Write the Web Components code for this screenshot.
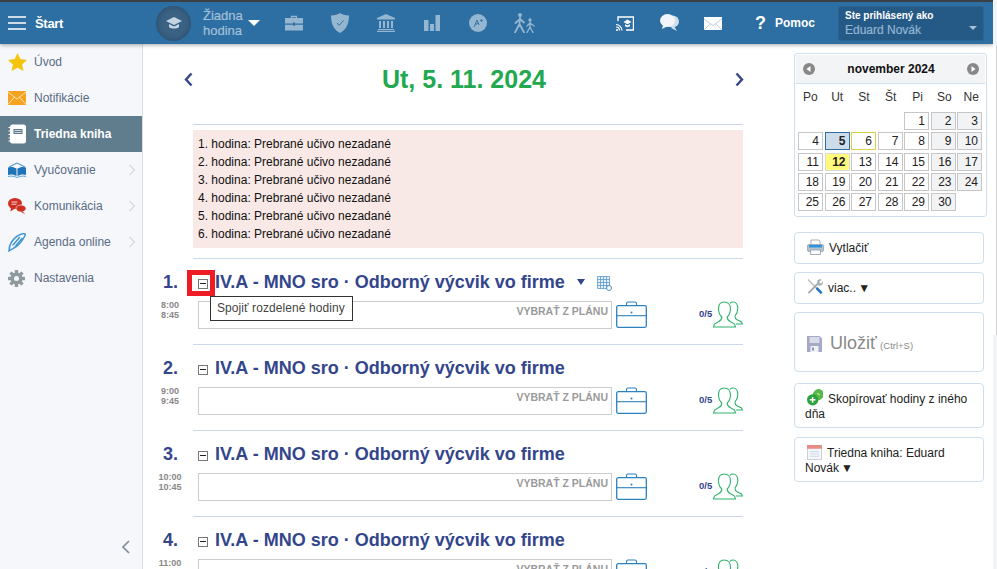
<!DOCTYPE html>
<html><head><meta charset="utf-8">
<style>
html,body{margin:0;padding:0;height:569px;overflow:hidden;background:#fff;font-family:"Liberation Sans",Arial,sans-serif}
app-shell{display:block}
</style></head><body>
<app-shell></app-shell>
<script>
const ICON={
menu:'<svg width="18" height="14" viewBox="0 0 18 14"><path d="M0 1h18M0 7h18M0 13h18" stroke="#fff" stroke-width="1.4"/></svg>',
cap:'<svg width="16" height="14" viewBox="0 0 16 14" fill="#c4d5e2"><path d="M8 1 0 5l8 4 8-4z"/><path d="M3 8v3c2 2 8 2 10 0V8L8 10.5z"/></svg>',
brief:'<svg width="18" height="16" viewBox="0 0 18 16"><path d="M6.5 3V1.500h5V3" fill="none" stroke="#94b6d1" stroke-width="1.300"/><path d="M0 3h18v5.500H10v-1H8v1H0zM0 9.700h8v1h2v-1h8V15.500H0z" fill="#94b6d1"/></svg>',
shield:'<svg width="18" height="20" viewBox="0 0 18 20"><path d="M9 0c2 1.500 5 2.500 9 2.500C18 10 16 16 9 20 2 16 0 10 0 2.500 4 2.500 7 1.500 9 0z" fill="#94b6d1"/><path d="M6 10l2.200 2.300L12.500 7.500" fill="none" stroke="#2d6ea3" stroke-width=".9"/></svg>',
bank:'<svg width="18" height="18" viewBox="0 0 18 18" fill="#94b6d1"><path d="M9 0 0 4v1.500h18V4z"/><path d="M2 7h2v7H2zM6 7h2v7H6zM10 7h2v7h-2zM14 7h2v7h-2zM1 15h16v1H1zM0 16.800h18V18H0z"/></svg>',
bars:'<svg width="16" height="16" viewBox="0 0 16 16" fill="#94b6d1"><path d="M0 5h4.500v11H0zM6 9h4v7H6zM11.500 0H16v16h-4.500z"/></svg>',
aplus:'<svg width="18" height="18" viewBox="0 0 18 18"><circle cx="9" cy="9" r="9" fill="#94b6d1"/><path d="M5 13l3-7 2 5M6.500 10.500 10 9" fill="none" stroke="#2d6ea3" stroke-width=".9"/><path d="M11 6.500h3M12.500 5v3" stroke="#2d6ea3" stroke-width=".8"/></svg>',
walk:'<svg width="22" height="20" viewBox="0 0 22 20" fill="none" stroke="#94b6d1" stroke-linecap="round"><circle cx="6" cy="2" r="2" fill="#94b6d1" stroke="none"/><circle cx="16" cy="7" r="1.700" fill="#94b6d1" stroke="none"/><path d="M6 4.500 5.500 11M5.500 11 1 19.500M5.500 11 10 19.500M6 6 1.500 10M6 6 10 9.500" stroke-width="1.800"/><path d="M16 9v5M16 14l-3 5.500M16 14l3 5.500M16 10l-3 3M16 10l4 3" stroke-width="1.400"/></svg>',
cast:'<svg width="18" height="15" viewBox="0 0 18 15"><path d="M2 5V1h15.500v13H10" fill="none" stroke="#fff" stroke-width="1.400"/><path d="M0 8.500c3 0 6 3 6 6M0 11c2 0 3.500 1.500 3.500 3.500" fill="none" stroke="#fff" stroke-width="1.200"/><circle cx="1" cy="14" r="1" fill="#fff"/><path d="M11.500 3.500 7.500 6l4 2.300L15.500 6z M9 8.300v2l2.500 1 2.500-1v-2l-2.500 1.200z" fill="#fff"/></svg>',
chat:'<svg width="19" height="18" viewBox="0 0 19 18"><ellipse cx="12.500" cy="7.500" rx="6.500" ry="6" fill="#cfdfeb"/><path d="M14 12l3 5-6-3z" fill="#cfdfeb"/><ellipse cx="7.500" cy="6.500" rx="7.500" ry="6.500" fill="#f2f6fa"/><path d="M3 11l-1 4 5-2.500z" fill="#f2f6fa"/></svg>',
mail:'<svg width="18" height="13" viewBox="0 0 18 13"><rect width="18" height="13" fill="#fff"/><path d="M0 2l9 6.500L18 2M0 13l6.500-6.500M18 13l-6.500-6.500" fill="none" stroke="#a9c4da" stroke-width=".8"/></svg>',
star:'<svg width="19" height="18" viewBox="0 0 19 18"><path d="M9.500 0l2.900 6.100 6.600.8-4.900 4.500 1.300 6.600-5.900-3.300L3.600 18l1.300-6.600L0 6.900l6.600-.8z" fill="#f5c40f"/></svg>',
env:'<svg width="18" height="14" viewBox="0 0 18 14"><rect width="18" height="14" fill="#f6a320"/><path d="M0 1l9 7 9-7M0 13.500l6.500-7.500M18 13.500 11.500 6" fill="none" stroke="#fde3b4" stroke-width="1"/></svg>',
book:'<svg width="19" height="20" viewBox="0 0 19 20"><rect x="2" y="0.500" width="16" height="19" rx="2.500" fill="#fff"/><rect x="5.500" y="5" width="9" height="5" fill="#5f7d8c"/><path d="M6.500 6.500h7M6.500 8.500h7" stroke="#fff" stroke-width=".7"/><path d="M0.500 3.500h3M0.500 7h3M0.500 10.500h3M0.500 14h3M0.500 17h3" stroke="#fff" stroke-width="1.200"/></svg>',
openbook:'<svg width="18" height="16" viewBox="0 0 18 16"><path d="M1 5 9 1l8 4" fill="none" stroke="#2f85c5" stroke-width="1"/><path d="M0 5.500c3-1 6-.5 8.500 1V14C6 12.500 3 12 0 13zM18 5.500c-3-1-6-.5-8.500 1V14c2.500-1.500 5.500-2 8.500-1z" fill="#1f75b8"/><path d="M0 14.500c3-.8 6-.3 9 1 3-1.300 6-1.800 9-1" fill="none" stroke="#5aa3d8" stroke-width="1"/></svg>',
talk:'<svg width="18" height="17" viewBox="0 0 18 17"><ellipse cx="7" cy="5.500" rx="7" ry="5.500" fill="#cf2f22"/><path d="M3 9.500l-.5 4 4.500-3z" fill="#cf2f22"/><path d="M3.500 4h6M3.500 6.200h5" stroke="#fff" stroke-width=".8"/><ellipse cx="13" cy="10.500" rx="5" ry="3.500" fill="#cf2f22" stroke="#fff" stroke-width=".6"/><path d="M14 13l3.500 3.500L13 14z" fill="#cf2f22"/></svg>',
quill:'<svg width="18" height="19" viewBox="0 0 18 19" fill="none" stroke="#3d94d6" stroke-width="1.500" stroke-linecap="round"><path d="M1 18c0-3 .5-6 2.500-9 3-4.500 7-7.500 12-8.500 2-.3 2 1.500 1 3-2 4-5 8-9 10.500-2 1.300-4 2-6.500 4z"/><path d="M5 12 11.500 4.500M8 12.500 14 5.500"/></svg>',
gear:'<svg width="17" height="17" viewBox="0 0 17 17"><g fill="#8e9a9d"><circle cx="8.500" cy="8.500" r="6"/><rect x="6.800" y="0" width="3.400" height="17" rx=".5"/><rect x="6.800" y="0" width="3.400" height="17" rx=".5" transform="rotate(45 8.500 8.500)"/><rect x="6.800" y="0" width="3.400" height="17" rx=".5" transform="rotate(90 8.500 8.500)"/><rect x="6.800" y="0" width="3.400" height="17" rx=".5" transform="rotate(135 8.500 8.500)"/></g><circle cx="8.500" cy="8.500" r="2.500" fill="#f5f7fa"/></svg>',
chev:'<svg width="8" height="12" viewBox="0 0 8 12"><path d="M1.500 1l5 5-5 5" fill="none" stroke="#d5dadf" stroke-width="1.300"/></svg>',
collapse:'<svg width="9" height="14" viewBox="0 0 9 14"><path d="M8 1 2 7l6 6" fill="none" stroke="#7d8f9e" stroke-width="1.700"/></svg>',
prev:'<svg width="9" height="15" viewBox="0 0 9 15"><path d="M7.500 1.500 2 7.500l5.500 6" fill="none" stroke="#33468c" stroke-width="2.400"/></svg>',
next:'<svg width="9" height="15" viewBox="0 0 9 15"><path d="M1.500 1.500 7 7.500l-5.500 6" fill="none" stroke="#33468c" stroke-width="2.400"/></svg>',
table:'<svg width="15" height="15" viewBox="0 0 15 15"><path d="M.5.500h12v12H.5zM.5 3.500h12M.5 6.500h12M.5 9.500h12M3.500.500v12M6.500.500v12M9.500.500v12" fill="#e6f0f8" stroke="#5c9bcb" stroke-width=".8"/><circle cx="12" cy="12" r="2.500" fill="#fff" stroke="#3d86bd" stroke-width=".9"/></svg>',
case:'<svg width="31" height="27" viewBox="0 0 31 27"><path d="M10.500 4.500V2.500q0-1.500 1.500-1.500h7q1.500 0 1.500 1.500v2" fill="none" stroke="#2b82bf" stroke-width="1.100"/><rect x=".7" y="4.700" width="29.600" height="21.600" rx="1.500" fill="#fff" stroke="#2b82bf" stroke-width="1.300"/><path d="M.7 14.700h29.600" stroke="#2b82bf" stroke-width="1.100"/><circle cx="15.500" cy="11.500" r="1" fill="#2b82bf"/></svg>',
people:'<svg width="30" height="27" viewBox="0 0 30 27" fill="none" stroke="#2fb36c" stroke-width="1.100"><path d="M17 2.300C18 1.300 19 1 20 1c3 0 4.800 3 4.800 6.500 0 3-1 5.500-2.800 7.500 0 2 .5 3 2 3.700l4.500 2.300.8 2H23"/><path d="M11 1C7.500 1 5.500 4 5.500 8c0 3.500 1.300 6 3.300 8 0 2.500-.6 3.500-3 4.500L1.500 23 .5 26h22l-1-3-4.300-2.500c-2.400-1-3-2-3-4.500 2-2 3.300-4.500 3.300-8 0-4-2-7-6.500-7z" fill="#fff"/></svg>',
printer:'<svg width="17" height="16" viewBox="0 0 17 16"><path d="M4 6V1h8l1 1v4" fill="#fff" stroke="#8b99a8" stroke-width=".8"/><rect x=".5" y="5.500" width="16" height="7" rx="1.500" fill="#b9c3cd" stroke="#8b99a8" stroke-width=".7"/><rect x="2" y="6" width="13" height="2.500" fill="#2c94de"/><path d="M3.500 11h10v4.500h-10z" fill="#fff" stroke="#8b99a8" stroke-width=".8"/></svg>',
tools:'<svg width="16" height="17" viewBox="0 0 17 17"><path d="M1 1 16 16" stroke="#b8bcc0" stroke-width="1.400"/><path d="M10 10l5.500 5.500" stroke="#1c72c0" stroke-width="2.600"/><path d="M1.500 15.500 11 6" stroke="#9ca3a9" stroke-width="1.800"/><path d="M11 2.500c1-1.500 3-2 4.500-1.200l-2.300 2.200.4 1.500 1.500.4L17 3c.5 2-.8 4-2.800 4.500-1.500.3-3-.3-3.700-1.300z" fill="#a6adb3"/></svg>',
save:'<svg width="15" height="16" viewBox="0 0 15 16"><path d="M0 0h12.500L15 2.500V16H0z" fill="#a5a9c6"/><rect x="2.500" y="1" width="10" height="6" fill="#d8dbea"/><rect x="3.500" y="10" width="8" height="6" fill="#f0f1f6"/><rect x="5" y="11.500" width="2" height="3" fill="#8f94b4"/></svg>',
copy:'<svg width="16" height="17" viewBox="0 0 17 17"><rect x="6.500" y="-0.500" width="11" height="12" rx="5" transform="rotate(45 12 5.500)" fill="#58b947"/><circle cx="6" cy="11" r="6" fill="#2fa23b"/><path d="M6 8v6M3 11h6" stroke="#fff" stroke-width="1.600"/><path d="M11 4l2.500 2" stroke="#bfe8b0" stroke-width="1.200"/></svg>',
cal:'<svg width="15" height="15" viewBox="0 0 16 16"><rect x=".5" y=".5" width="15" height="15" fill="#f5f7fa" stroke="#c9ced3"/><rect x="0" y="0" width="16" height="4" fill="#e88c88"/><path d="M3 7h10M3 9.500h10M3 12h10" stroke="#c7d4e2" stroke-width=".9"/></svg>',
calprev:'<svg width="12" height="12" viewBox="0 0 12 12"><circle cx="6" cy="6" r="6" fill="#888"/><path d="M7.500 3v6L3.500 6z" fill="#fff"/></svg>',
calnext:'<svg width="12" height="12" viewBox="0 0 12 12"><circle cx="6" cy="6" r="6" fill="#888"/><path d="M4.500 3v6l4-3z" fill="#fff"/></svg>'
};
function tpl(name,css,render){
  customElements.define(name,class extends HTMLElement{
    connectedCallback(){if(this.shadowRoot)return;const s=this.attachShadow({mode:'open'});
      s.innerHTML='<style>'+css+'</style>'+render(this);}
  });
}
tpl('top-bar',`:host{display:flex;height:42px;width:993px;background:#2d6ea3;border-top:2px solid #3b4046;box-shadow:0 1px 4px rgba(0,0,0,.35);position:relative;z-index:2;align-items:center;color:#fff;font-weight:400}
.start{display:flex;align-items:center;gap:9px;padding-left:8px;width:156px;box-sizing:border-box;font-size:13px;font-weight:700;letter-spacing:-.3px;flex:none}
.avatar{width:35px;height:35px;border-radius:50%;background:#3b6284;display:flex;align-items:center;justify-content:center;flex:none;margin-right:12px;box-shadow:inset 0 0 6px rgba(20,50,80,.5)}
.lesson{font-size:13px;line-height:15px;font-weight:400;color:#a3c1d9;width:45px;flex:none;-webkit-text-stroke:.2px #a3c1d9}
.tri{width:0;height:0;border:6px solid transparent;border-top:6px solid #fff;border-bottom:0;margin-right:25px;flex:none}
.ic{display:flex;justify-content:center;align-items:center;flex:none}
.help{font-size:18px;font-weight:700;margin-right:10px;width:10px;text-align:center}
.pom{font-size:12px;font-weight:700;width:40px;white-space:nowrap}
.user{position:relative;margin-left:23px;width:146px;height:35px;background:#255a87;border-radius:3px;border:1px solid #2a6493;box-sizing:border-box;padding:2px 6px;font-size:10px;font-weight:700;line-height:14px;flex:none}
.user b{display:block;color:#93b6d3;font-size:12px;line-height:15px;font-weight:400;-webkit-text-stroke:.2px #93b6d3}
.user i{position:absolute;right:6px;top:19px;width:0;height:0;border:4px solid transparent;border-top:4px solid #a9c2d6;border-bottom:0}`,
()=>`<div class="start">${ICON.menu}<span>Štart</span></div>
<div class="avatar">${ICON.cap}</div><div class="lesson">Žiadna hodina</div><div class="tri"></div>
<div class="ic" style="margin-right:28px">${ICON.brief}</div><div class="ic" style="margin-right:28px">${ICON.shield}</div><div class="ic" style="margin-right:29px">${ICON.bank}</div><div class="ic" style="margin-right:29px">${ICON.bars}</div><div class="ic" style="margin-right:27px">${ICON.aplus}</div><div class="ic" style="margin-right:80px">${ICON.walk}</div>
<div class="ic" style="margin-right:26px">${ICON.cast}</div><div class="ic" style="margin-right:25px">${ICON.chat}</div><div class="ic" style="margin-right:33px">${ICON.mail}</div>
<div class="help">?</div><div class="pom">Pomoc</div>
<div class="user">Ste prihlásený ako<b>Eduard Novák</b><i></i></div>`);
tpl('nav-item',`:host{display:flex;align-items:center;height:36px;padding-left:8px;font-size:12px;color:#5a6b85;position:relative}
:host([active]){background:#5f7d8c;color:#fff;font-weight:700}
.i{width:26px;display:flex;align-items:center;flex:none}
.c{position:absolute;right:6px;top:12px;line-height:0}`,
e=>`<span class="i">${ICON[e.getAttribute('icon')]}</span><span><slot></slot></span>${e.hasAttribute('sub')?`<span class="c">${ICON.chev}</span>`:''}`);
tpl('side-bar',`:host{display:block;width:142px;border-right:1px solid #d7dce1;background:#f5f7fa;position:relative;flex:none;height:525px}
.col{position:absolute;left:121px;top:496px;line-height:0}`,
()=>`<slot></slot><span class="col">${ICON.collapse}</span>`);
tpl('lesson-row',`:host{display:block;width:600px;height:86px;box-sizing:border-box;position:relative}
.head{display:flex;align-items:center;height:21px}
.n{font-size:18px;font-weight:700;color:#33468c;flex:none;margin-left:-2px;width:37px;text-align:right}
.box{width:10px;height:10px;border:1px solid #777;box-sizing:border-box;flex:none;margin-left:20px;position:relative;top:1px}
.box::after{content:"";position:absolute;left:1px;right:1px;top:3px;height:1px;background:#222}
.t{font-size:18px;font-weight:700;color:#33468c;margin-left:7px;white-space:nowrap}
.tri{width:0;height:0;border:4px solid transparent;border-top:6px solid #33468c;border-bottom:0;margin-left:12px;position:relative;top:-1px}
.tb{margin-left:12px;line-height:0;position:relative;top:1px}
.body{display:flex;margin-top:8px;height:28px;align-items:flex-start}
.time{width:54px;flex:none;font-size:9px;line-height:10px;font-weight:700;color:#888;text-align:center;margin-top:-1px;box-sizing:border-box}
.inp{margin-left:1px;width:414px;height:28px;box-sizing:border-box;border:1px solid #ccc;flex:none;text-align:right;font-size:10.500px;font-weight:700;color:#9a9a9a;padding:3px 3px 0 0;line-height:13px}
.case{margin-left:4px;line-height:0;flex:none}
.cnt{margin-left:52px;font-size:9.500px;font-weight:700;color:#33468c;width:14px;margin-top:7px;flex:none;line-height:11px}
.ppl{line-height:0;flex:none}
hr{border:0;border-top:1px solid #c9d9e9;margin:15px 0 0 50px;width:550px}`,
e=>{const f=e.hasAttribute('first');return `<div class="head"><div class="n">${e.getAttribute('n')}.</div><div class="box"></div><div class="t">IV.A - MNO sro · Odborný výcvik vo firme</div>${f?`<div class="tri"></div><div class="tb">${ICON.table}</div>`:''}</div>
<div class="body"><div class="time">${e.getAttribute('from')}<br>${e.getAttribute('to')}</div><div class="inp">VYBRAŤ Z PLÁNU</div><div class="case">${ICON.case}</div><div class="cnt">0/5</div><div class="ppl">${ICON.people}</div></div><hr>`});
tpl('mini-calendar',`:host{display:block;width:193px;height:164px;box-sizing:border-box;border:1px solid #cfdfee;border-radius:3px;background:#fff;padding:1px}
.h{display:flex;align-items:center;justify-content:space-between;height:28px;background:#f3f4f6;border-bottom:1px solid #cfdfee;padding:0 6px 0 7px;font-size:12px;font-weight:700;color:#111}
.h svg{display:block}
.d{display:grid;grid-template-columns:repeat(7,26.800px);font-size:12px;color:#333;text-align:center;height:28px;line-height:26px;padding-left:1px}
.g{display:grid;grid-template-columns:repeat(7,25px);gap:2.250px 1.500px;padding-left:2px;grid-auto-rows:18px}
.g div{border:1px solid #c6c6c6;box-sizing:border-box;font-size:12px;line-height:16px;text-align:right;padding-right:3px;color:#222;background:#fff}
.g div.e{border:0;background:none}
.g .w{background:#f2f3f5}
.g .s{background:#cddceb;border-color:#2d6ea3;font-weight:700}
.g .y{border-color:#d8cf4a}
.g .t{background:#fff97e;font-weight:700;border-color:#d9d9d9}`,
()=>{const days=['Po','Ut','St','Št','Pi','So','Ne'];let g='';for(let i=0;i<4;i++)g+='<div class="e"></div>';
 for(let d=1;d<=30;d++){const col=(d+3)%7;let c=col>=5?'w':'';if(d==5)c='s';if(d==6)c='y';if(d==12)c='t';g+=`<div class="${c}">${d}</div>`;}
 return `<div class="h">${ICON.calprev}<span>november 2024</span>${ICON.calnext}</div><div class="d">${days.map(x=>`<span>${x}</span>`).join('')}</div><div class="g">${g}</div>`});
tpl('side-btn',`:host{display:block;width:190px;box-sizing:border-box;border:1px solid #cfdfee;border-radius:4px;background:#fff;font-size:12px;color:#222;line-height:15px;padding:8px 10px 7px 10px}
:host([big]){padding:23px 10px 0;height:60px;color:#8a8a8a}
:host([two]){height:45px}
svg{margin:-4px 5px -3px 2px}
:host([big]) svg{margin-right:8px}`,
e=>`${ICON[e.getAttribute('icon')]}<slot></slot>`);
tpl('app-shell',`:host{display:block;height:569px;overflow:hidden;position:relative}
.main{display:flex;height:525px;overflow:hidden}
.content{flex:none;width:651px;position:relative;height:525px;overflow:hidden}
.date{display:flex;justify-content:space-between;align-items:center;width:560px;margin:20px 0 0 41px;height:30px}
.date h1{margin:0;font-size:25px;font-weight:700;color:#22a84f;line-height:30px}
.date svg{display:block}
.rule{border:0;border-top:1px solid #c9d9e9;margin:0 0 0 50px;width:550px}
.pink{margin:5px 0 10px 50px;width:550px;height:118px;background:#f8e8e6;box-sizing:border-box;padding:5px 5px;font-size:12px;line-height:18px;color:#111}
.lessons{margin-top:13px;display:block}
.right{flex:none;width:198px;padding:9px 0 0 0;box-sizing:border-box;display:flex;flex-direction:column;align-items:flex-start}
.tip{position:absolute;left:67px;top:252px;background:#fff;border:1px solid #333;box-sizing:border-box;height:25px;width:143px;font-size:12px;letter-spacing:.08px;color:#444;line-height:23px;padding-left:6px;white-space:nowrap;z-index:3}
.red{position:absolute;left:44px;top:226px;width:28px;height:26px;box-sizing:border-box;border:5px solid #ee1c25;z-index:3}
.bar{position:absolute;right:0;top:0;height:569px;width:4px;background:#f3f4f5;z-index:5}
.thumb{position:absolute;right:0;top:45px;height:290px;width:4px;box-sizing:border-box;background:#fff;border-right:1px solid #cfcfcf;z-index:6}`,
()=>`<top-bar></top-bar><div class="main">
<side-bar>
<nav-item icon="star">Úvod</nav-item><nav-item icon="env">Notifikácie</nav-item><nav-item icon="book" active>Triedna kniha</nav-item><nav-item icon="openbook" sub>Vyučovanie</nav-item><nav-item icon="talk" sub>Komunikácia</nav-item><nav-item icon="quill" sub>Agenda online</nav-item><nav-item icon="gear">Nastavenia</nav-item>
</side-bar>
<div class="content">
<div class="date"><span>${ICON.prev}</span><h1>Ut, 5. 11. 2024</h1><span>${ICON.next}</span></div>
<hr class="rule" style="margin-top:30px">
<div class="pink">1. hodina: Prebrané učivo nezadané<br>2. hodina: Prebrané učivo nezadané<br>3. hodina: Prebrané učivo nezadané<br>4. hodina: Prebrané učivo nezadané<br>5. hodina: Prebrané učivo nezadané<br>6. hodina: Prebrané učivo nezadané</div>
<hr class="rule">
<div class="lessons">
<lesson-row n="1" from="8:00" to="8:45" first></lesson-row>
<lesson-row n="2" from="9:00" to="9:45"></lesson-row>
<lesson-row n="3" from="10:00" to="10:45"></lesson-row>
<lesson-row n="4" from="11:00" to="11:45"></lesson-row>
</div>
<div class="red"></div><div class="tip">Spojiť rozdelené hodiny</div>
</div>
<div class="right">
<mini-calendar></mini-calendar>
<side-btn icon="printer" style="margin-top:15px">Vytlačiť</side-btn>
<side-btn icon="tools" style="margin-top:8px">viac.. <span style="margin-left:-1px">▼</span></side-btn>
<side-btn icon="save" big style="margin-top:8px"><span style="font-size:18px">Uložiť</span> <span style="font-size:9.500px">(Ctrl+S)</span></side-btn>
<side-btn icon="copy" two style="margin-top:11px">Skopírovať hodiny z iného dňa</side-btn>
<side-btn icon="cal" two style="margin-top:9px">Triedna kniha: Eduard Novák<span style="margin-left:2px">▼</span></side-btn>
</div>
</div><div class="bar"></div><div class="thumb"></div>`);
</script>
</body></html>
